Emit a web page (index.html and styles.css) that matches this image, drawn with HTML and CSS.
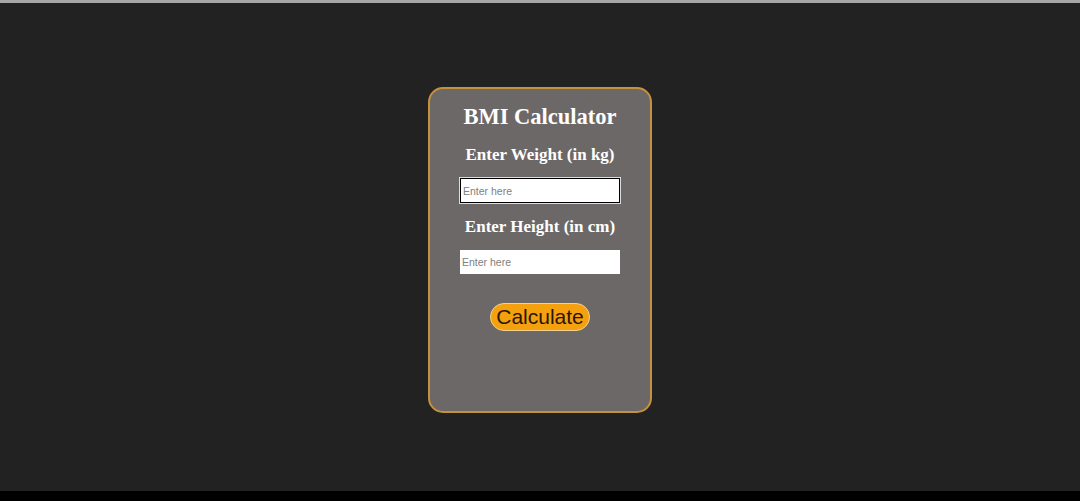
FILE: index.html
```html
<!DOCTYPE html>
<html lang="en">
<head>
  <meta charset="UTF-8" />
  <meta name="viewport" content="width=device-width, initial-scale=1.0"/>
  <title>BMI Calculator</title>
  <link rel="stylesheet" href="styles.css">
</head>
<body>

<div class="top-edge"></div>

<main class="page">
  <div class="card">
    <h1 class="title">BMI Calculator</h1>

    <label class="label" for="weight">Enter Weight (in kg)</label>
    <input class="field focused" id="weight" type="text" placeholder="Enter here">

    <label class="label" for="height">Enter Height (in cm)</label>
    <input class="field" id="height" type="text" placeholder="Enter here">

    <button class="btn" type="button">Calculate</button>
  </div>
</main>

<div class="bottom-edge"></div>

</body>
</html>
```

FILE: styles.css
```css
/* Reset */
* {
  margin: 0;
  padding: 0;
  box-sizing: border-box;
}

html,
body {
  height: 100%;
  background: #222222;
  font-family: 'Liberation Serif', 'Times New Roman', serif;
  color: #ffffff;
  overflow: hidden;
}

body {
  display: flex;
  flex-direction: column;
}

.top-edge {
  height: 3px;
  background: #a9a6a8;
}

.bottom-edge {
  height: 10px;
  background: #000;
}

/* Страница */
.page {
  flex: 1;
  display: flex;
  justify-content: center;
  align-items: flex-start;
  padding-top: 84px;
}

/* Карточка */
.card {
  width: 224px;
  height: 326px;
  background: #6c6868;
  border: 2px solid #c4913c;
  border-radius: 15px;
  display: flex;
  flex-direction: column;
  align-items: center;
  padding-top: 15px;
}

.title {
  font-size: 22.5px;
  font-weight: bold;
  line-height: 26px;
  margin-bottom: 15px;
}

.label {
  font-size: 17px;
  font-weight: bold;
  line-height: 20px;
  margin-bottom: 13px;
}

.field {
  width: 160px;
  height: 24px;
  border: none;
  background: #fff;
  padding: 0 2px;
  font-family: 'Liberation Sans', Arial, sans-serif;
  font-size: 10.5px;
  color: #222;
  outline: none;
  margin-bottom: 15px;
}

.field::placeholder {
  color: #808080;
}

.field.focused {
  height: 25px;
  border: 1px solid #000;
  box-shadow: 0 0 0 1px #ddd;
  margin-bottom: 14px;
}

.btn {
  width: 100px;
  height: 28px;
  margin-top: 14px;
  background: #f5a00e;
  border: 1px solid #f3d38e;
  border-radius: 14px;
  font-family: 'Liberation Sans', Arial, sans-serif;
  font-size: 21px;
  color: #2a1604;
  cursor: pointer;
}
```
